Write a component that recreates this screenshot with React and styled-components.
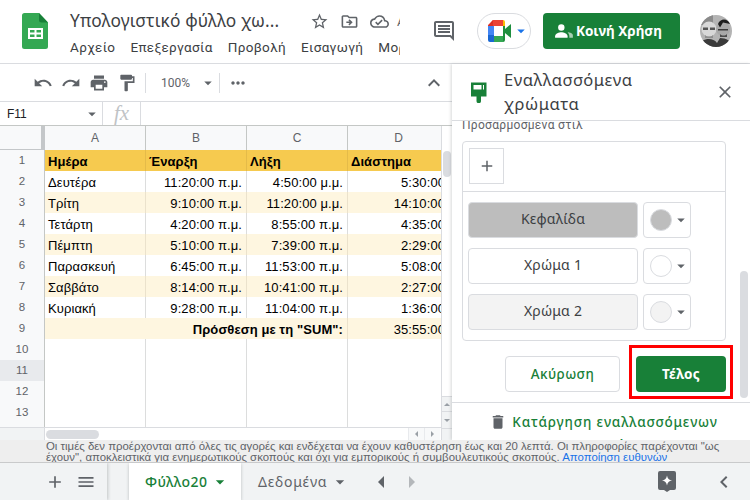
import React from "react";
import styled, { createGlobalStyle } from "styled-components";
import {
  MdUndo,
  MdRedo,
  MdPrint,
  MdFormatPaint,
  MdStarBorder,
  MdOutlineDriveFileMove,
  MdOutlineCloudDone,
  MdOutlineComment,
  MdKeyboardArrowUp,
  MdClose,
  MdAdd,
  MdDelete,
  MdArrowDropDown,
  MdChevronLeft,
  MdMoreHoriz,
  MdMenu,
} from "react-icons/md";

const Global = createGlobalStyle`
  html, body { margin: 0; padding: 0; background: #fff; }
  body { width: 750px; height: 500px; overflow: hidden; font-family: "Liberation Sans", Arial, sans-serif; }
  * { box-sizing: border-box; }
`;

const Page = styled.div`
  width: 750px;
  height: 500px;
  display: flex;
  flex-direction: column;
  overflow: hidden;
`;

/* top bar */
const TopBar = styled.header`
  height: 64px;
  flex-shrink: 0;
  display: flex;
  border-bottom: 1px solid #dadce0;
`;
const DocSide = styled.div`
  width: 400px;
  display: flex;
  padding: 13px 0 0 22px;
  overflow: hidden;
  white-space: nowrap;
  svg { flex-shrink: 0; }
`;
const DocText = styled.div`
  margin-left: 21px;
  margin-top: -2px;
  display: flex;
  flex-direction: column;
`;
const TitleRow = styled.div`
  display: flex;
  align-items: center;
  height: 20px;
`;
const Title = styled.div`
  width: 240px;
  font: 17.3px/20px "Noto Sans", sans-serif;
  color: #3c4043;
  letter-spacing: 0.15px;
`;
const TitleIcons = styled.div`
  display: flex;
  align-items: center;
  gap: 11px;
  color: #5f6368;
  font-size: 19px;
  svg { flex-shrink: 0; }
`;
const Saved = styled.span`
  margin-left: -3px;
  font: 13px Roboto, sans-serif;
  color: #5f6368;
`;
const Menu = styled.nav`
  display: flex;
  gap: 15px;
  margin-top: 6px;
  font: 13.5px/20px Roboto, sans-serif;
  letter-spacing: 0.35px;
  color: #3c4043;
`;
const ActionSide = styled.div`
  flex: 1;
  display: flex;
  align-items: center;
  padding: 0 18px 2px 32px;
  color: #5f6368;
`;
const MeetButton = styled.div`
  width: 54px;
  height: 36px;
  margin-left: 21px;
  border: 1px solid #dadce0;
  border-radius: 18px;
  display: flex;
  align-items: center;
  padding-left: 10px;
  svg { flex-shrink: 0; }
`;
const ShareButton = styled.button`
  width: 137px;
  height: 36px;
  margin-left: 12px;
  border: 0;
  border-radius: 4px;
  background: #188038;
  color: #fff;
  display: flex;
  align-items: center;
  gap: 2px;
  padding: 0 0 0 11px;
  font: 700 13.5px "Noto Sans", sans-serif;
  white-space: nowrap;
`;
const Avatar = styled.svg`
  margin-left: 20px;
  flex-shrink: 0;
`;

/* main area */
const Body = styled.div`
  height: 376px;
  flex-shrink: 0;
  display: flex;
`;
const SheetSide = styled.div`
  width: 452px;
  flex-shrink: 0;
  display: flex;
  flex-direction: column;
  background: #fff;
`;
const Toolbar = styled.div`
  height: 38px;
  flex-shrink: 0;
  display: flex;
  align-items: center;
  padding-left: 33px;
  border-bottom: 1px solid #dadce0;
  color: #5f6368;
  font-size: 20px;
  svg { flex-shrink: 0; }
`;
const ToolIcons = styled.div`
  display: flex;
  align-items: center;
  gap: 8px;
`;
const ToolDivider = styled.div`
  width: 1px;
  height: 20px;
  background: #dadce0;
  margin: ${(p) => p.$margin};
`;
const Zoom = styled.span`
  font: 12px Roboto, sans-serif;
  color: #5f6368;
  width: 38px;
`;
const CollapseIcon = styled.div`
  margin-left: auto;
  margin-right: 6px;
  display: flex;
  font-size: 24px;
`;
const FormulaBar = styled.div`
  height: 24px;
  flex-shrink: 0;
  display: flex;
  align-items: center;
  border-bottom: 1px solid #c4c7c5;
`;
const CellName = styled.div`
  width: 103px;
  height: 100%;
  padding-left: 7px;
  display: flex;
  align-items: center;
  justify-content: space-between;
  font: 12px "Liberation Sans", sans-serif;
  color: #202124;
  border-right: 1px solid #dadce0;
  svg { margin-right: 1px; color: #5f6368; }
`;
const Fx = styled.div`
  width: 38px;
  height: 100%;
  font: italic 21px/22px "Liberation Serif", serif;
  color: #c0c3c6;
  text-align: center;
  border-right: 1px solid #dadce0;
`;
const GridArea = styled.div`
  flex: 1;
  min-height: 0;
  display: flex;
`;
const GridColumn = styled.div`
  width: 441px;
  flex-shrink: 0;
  display: flex;
  flex-direction: column;
  overflow: hidden;
`;
const Grid = styled.div`
  width: 450px;
  flex: 1;
  min-height: 0;
  overflow: hidden;
`;
const Row = styled.div`
  display: grid;
  grid-template-columns: 45px 101px 101px 101px 102px;
  height: ${(p) => (p.$head ? 24 : 21)}px;
`;
const Corner = styled.div`
  background: #f8f9fa;
  border-right: 4px solid #c4c7c9;
  border-bottom: 3px solid #c4c7c9;
`;
const ColHead = styled.div`
  background: #f8f9fa;
  border-right: 1px solid #c4c7c5;
  border-bottom: 1px solid #c4c7c5;
  font: 12px/25px "Liberation Sans", sans-serif;
  color: #5f6368;
  text-align: center;
`;
const RowHead = styled.div`
  background: ${(p) => (p.$active ? "#e8eaed" : "#f8f9fa")};
  border-right: 1px solid #c4c7c5;
  border-bottom: 1px solid #c4c7c5;
  font: 11.5px/21px "Liberation Sans", sans-serif;
  color: #5f6368;
  text-align: center;
`;
const rowColors = { head: "#f6ca4f", band: "#fef6e0", plain: "#fff" };
const lineColors = { head: "#e5bb49", band: "#ebe2cc", plain: "#dcdddd" };
const Cell = styled.div`
  grid-column: span ${(p) => p.$span || 1};
  background: ${(p) => rowColors[p.$tone]};
  border-right: 1px solid ${(p) => lineColors[p.$tone]};
  border-bottom: 1px solid ${(p) => lineColors[p.$tone]};
  padding: 1px 4px 0 3px;
  font: ${(p) => (p.$bold ? 700 : 400)} 13px/21px "Liberation Sans", sans-serif;
  letter-spacing: 0.08px;
  color: #000;
  text-align: ${(p) => (p.$right ? "right" : "left")};
  white-space: nowrap;
  overflow: hidden;
`;
const HScrollBar = styled.div`
  height: 13px;
  flex-shrink: 0;
  display: flex;
  align-items: center;
  background: #fff;
  border-top: 1px solid #dadce0;
`;
const HScrollCorner = styled.div`
  width: 45px;
  height: 100%;
  background: #f1f3f4;
  border-right: 1px solid #dadce0;
`;
const HThumb = styled.div`
  width: 53px;
  height: 9px;
  margin-left: 1px;
  border-radius: 5px;
  background: #dadce0;
`;
const ArrowBox = styled.div`
  width: 16px;
  height: 100%;
  display: flex;
  align-items: center;
  justify-content: center;
  border-left: 1px solid #e8eaed;
  background: #f8f9fa;
  margin-left: ${(p) => p.$push || 0};
`;
const Tri = styled.span`
  width: 0;
  height: 0;
  border: 3.5px solid transparent;
  ${(p) => p.$dir === "left" && "border-right-color: #9aa0a6; border-left-width: 0;"}
  ${(p) => p.$dir === "right" && "border-left-color: #9aa0a6; border-right-width: 0;"}
  ${(p) => p.$dir === "up" && "border-bottom-color: #9aa0a6; border-top-width: 0;"}
  ${(p) => p.$dir === "down" && "border-top-color: #9aa0a6; border-bottom-width: 0;"}
`;
const VScroll = styled.div`
  width: 11px;
  flex-shrink: 0;
  display: flex;
  flex-direction: column;
  align-items: center;
  padding-top: 25px;
  background: #fff;
  border-left: 1px solid #dadce0;
`;
const VThumb = styled.div`
  width: 8px;
  height: 26px;
  border-radius: 4px;
  background: #dadce0;
`;
const VArrows = styled.div`
  margin-top: auto;
  width: 100%;
  display: flex;
  flex-direction: column;
  background: #f1f3f4;
`;
const VArrow = styled.div`
  height: ${(p) => p.$height}px;
  display: flex;
  align-items: center;
  justify-content: center;
  border-top: 1px solid #dadce0;
`;

/* side panel */
const Panel = styled.aside`
  flex: 1;
  display: flex;
  flex-direction: column;
  background: #fff;
  box-shadow: -1px 0 3px rgba(60, 64, 67, 0.2);
  z-index: 1;
  min-height: 0;
  overflow: hidden;
`;
const PanelHead = styled.div`
  height: 57px;
  flex-shrink: 0;
  display: flex;
  align-items: center;
  padding-left: 16px;
  border-bottom: 1px solid #dadce0;
  color: #5f6368;
`;
const PanelTitle = styled.div`
  width: 196px;
  margin-left: 14px;
  font: 16.5px/24px "Noto Sans", sans-serif;
  letter-spacing: 0.6px;
  color: #3c4043;
`;
const CloseIcon = styled.div`
  margin-left: 15px;
  display: flex;
  font-size: 20px;
`;
const PanelScroll = styled.div`
  flex: 1;
  min-height: 0;
  position: relative;
  padding: 0 24px 0 10px;
  overflow: hidden;
`;
const Clipped = styled.div`
  height: 20px;
  font: 12px/9px Roboto, sans-serif;
  letter-spacing: 0.3px;
  color: #5f6368;
`;
const StyleCard = styled.div`
  width: 264px;
  height: 200px;
  border: 1px solid #dadce0;
  border-radius: 4px;
`;
const AddRow = styled.div`
  height: 50px;
  padding: 6px 0 0 6px;
  border-bottom: 1px solid #dadce0;
`;
const AddBox = styled.div`
  width: 35px;
  height: 36px;
  border: 1px solid #dadce0;
  display: flex;
  align-items: center;
  justify-content: center;
  color: #5f6368;
  font-size: 18px;
`;
const ColorRows = styled.div`
  display: flex;
  flex-direction: column;
  gap: 10px;
  padding: 10px 0 0 5px;
`;
const ColorRow = styled.div`
  display: flex;
  gap: 5px;
`;
const ColorLabel = styled.div`
  width: 170px;
  height: 36px;
  border: 1px solid #dadce0;
  border-radius: 4px;
  background: ${(p) => p.$bg};
  font: 14px/32px "Noto Sans", sans-serif;
  letter-spacing: 0.2px;
  color: #3c4043;
  text-align: center;
`;
const ColorPick = styled.div`
  width: 48px;
  height: 36px;
  border: 1px solid #dadce0;
  border-radius: 4px;
  display: flex;
  align-items: center;
  padding-left: 6px;
  color: #5f6368;
  font-size: 18px;
`;
const Swatch = styled.span`
  width: 22px;
  height: 22px;
  flex-shrink: 0;
  border-radius: 50%;
  border: 1px solid #dadce0;
  background: ${(p) => p.$bg};
`;
const Actions = styled.div`
  display: flex;
  gap: 16px;
  justify-content: flex-end;
  width: 264px;
  margin-top: 15px;
`;
const CancelButton = styled.button`
  width: 115px;
  height: 36px;
  background: #fff;
  border: 1px solid #dadce0;
  border-radius: 4px;
  font: 500 13.5px "Noto Sans", sans-serif;
  letter-spacing: 0.4px;
  color: #188038;
`;
const DoneButton = styled.button`
  position: relative;
  width: 90px;
  height: 36px;
  background: #188038;
  border: 0;
  border-radius: 4px;
  font: 700 13.5px "Noto Sans", sans-serif;
  letter-spacing: 0.3px;
  color: #fff;
  &::after {
    content: "";
    position: absolute;
    inset: -11px -7px -7px -7px;
    border: 3px solid #f00;
  }
`;
const PanelThumb = styled.div`
  position: absolute;
  right: 2px;
  top: 150px;
  width: 8px;
  height: 127px;
  border-radius: 4px;
  background: #dadce0;
`;
const PanelFoot = styled.div`
  height: 38px;
  flex-shrink: 0;
  border-top: 1px solid #dadce0;
  display: flex;
  align-items: flex-start;
  padding: 8px 0 0 37px;
  gap: 4px;
  overflow: hidden;
  svg { color: #5f6368; flex-shrink: 0; margin-top: 2px; }
`;
const FootLabel = styled.div`
  width: 208px;
  text-align: center;
  font: 500 13.5px/23px "Noto Sans", sans-serif;
  letter-spacing: 0.85px;
  color: #188038;
`;

/* bottom */
const Notice = styled.div`
  height: 23px;
  flex-shrink: 0;
  background: #eeeeee;
  border-bottom: 1px solid #c9cacb;
  padding: 1px 0 0 46px;
  font: 11.4px/11px "Liberation Sans", sans-serif;
  color: #5f6368;
  white-space: nowrap;
  overflow: hidden;
  position: relative;
  z-index: 2;
`;
const Disclaimer = styled.span`
  color: #1a73e8;
`;
const TabBar = styled.div`
  height: 37px;
  flex-shrink: 0;
  display: flex;
  align-items: stretch;
  background: #f1f3f4;
  color: #5f6368;
`;
const AddSheets = styled.div`
  width: 107px;
  display: flex;
  align-items: center;
  gap: 11px;
  padding-left: 45px;
  font-size: 20px;
  box-shadow: 1px 0 3px rgba(60, 64, 67, 0.25);
`;
const Tab = styled.div`
  display: flex;
  align-items: center;
  width: ${(p) => p.$width}px;
  margin-left: ${(p) => p.$left || 0}px;
  padding-left: ${(p) => p.$pad}px;
  background: ${(p) => (p.$active ? "#fff" : "transparent")};
  color: ${(p) => (p.$active ? "#188038" : "#5f6368")};
  font: ${(p) => (p.$active ? 500 : 400)} 14px "Noto Sans", sans-serif;
  letter-spacing: ${(p) => (p.$active ? 0.4 : 0.8)}px;
  box-shadow: ${(p) => (p.$active ? "0 1px 3px rgba(60,64,67,.3)" : "none")};
  white-space: nowrap;
  svg { margin-left: 3px; flex-shrink: 0; }
`;
const TabNav = styled.div`
  display: flex;
  align-items: center;
  gap: 25px;
  margin-left: 32px;
`;
const NavTri = styled.span`
  width: 0;
  height: 0;
  border: 6px solid transparent;
  ${(p) => (p.$dir === "left" ? `border-right-color: #5f6368; border-left-width: 0;` : `border-left-color: #b4b7ba; border-right-width: 0;`)}
`;
const TabEnd = styled.div`
  margin-left: auto;
  display: flex;
  align-items: center;
  gap: 36px;
  padding-right: 14px;
`;

const SheetsLogo = () => (
  <svg width="27" height="36" viewBox="0 0 27 36">
    <path d="M2.5 0H17l9 9.5V33.5a2.5 2.5 0 0 1-2.5 2.5h-21A2.500 2.500 0 0 1 0 33.500V2.500A2.500 2.500 0 0 1 2.500 0z" fill="#34a853" />
    <path d="M17 0l9 9.500h-6.500A2.500 2.500 0 0 1 17 7z" fill="#188038" />
    <path d="M6 15h15v11H6zm2 2v2.500h4.500V17zm6.500 0v2.500H19V17zM8 21.500V24h4.500v-2.500zm6.500 0V24H19v-2.500z" fill="#fff" fillRule="evenodd" />
  </svg>
);

const MeetLogo = () => (
  <svg width="24" height="22" viewBox="0 0 24 22">
    <path d="M5 0h10v6H6v5H0V5z" fill="#ea4335" />
    <path d="M5 0v6H0z" fill="#d93025" />
    <path d="M0 6h6v9H0z" fill="#4285f4" />
    <path d="M0 15h6v7H2a2 2 0 0 1-2-2z" fill="#1967d2" />
    <path d="M6 16h9v6H6z" fill="#34a853" />
    <path d="M15 0a2 2 0 0 1 2 2v5h-2z" fill="#fbbc04" />
    <path d="M15 6h2v3l6-5v14l-6-5v7a2 2 0 0 1-2 2z" fill="#1e8e3e" />
  </svg>
);

const AvatarImage = () => (
  <Avatar width="32" height="32" viewBox="0 0 32 32">
    <clipPath id="av"><circle cx="16" cy="16" r="16" /></clipPath>
    <g clipPath="url(#av)">
      <rect width="32" height="32" fill="#b4b4b4" />
      <rect x="0" y="0" width="13" height="10" fill="#8a8a8a" />
      <circle cx="9" cy="14" r="7.500" fill="#d8d8d8" />
      <path d="M3 12.500h5v2.500H3zM10 12.500h5v2.500h-5z" fill="#555" />
      <path d="M5 20c2 2 6 2 8 0v3H5z" fill="#8f8f8f" />
      <circle cx="23" cy="14" r="7" fill="#a8a8a8" />
      <path d="M18 9c2-6 10-6 12 0l-7-1.500-3 5z" fill="#1e1e1e" />
      <path d="M18 14h10v1.500H18z" fill="#3a3a3a" />
      <path d="M20 19c2 2 5 2 7 0v3h-7z" fill="#4a4a4a" />
      <path d="M0 32c0-6 4-8 9-8 3 0 6 1 8 4l3-5c6 0 12 3 12 9z" fill="#3a3a3a" />
    </g>
  </Avatar>
);

const PanelPaint = () => (
  <svg width="22" height="22" viewBox="0 0 22 22" style={{ flexShrink: 0 }}>
    <path d="M3 1.500h15.500v14H3zM5.500 4v4.500h8V4zM15 4v4.500h1V4z" fill="#188038" fillRule="evenodd" />
    <path d="M8.500 15h4.500v5a2.250 2.250 0 0 1-4.500 0z" fill="#188038" />
  </svg>
);

const ShareIcon = () => (
  <svg width="20" height="16" viewBox="0 0 22 18">
    <circle cx="8" cy="5" r="3.600" fill="#fff" />
    <path d="M1 15c0-3 4.500-4.500 7-4.500S15 12 15 15v1.500H1z" fill="#fff" />
    <path d="M15 10.500c2.500 0 6 1 6 3.500v2.500h-4V15c0-2-1-3.500-2-4.500z" fill="#a5d0b2" />
  </svg>
);

const ExploreIcon = () => (
  <svg width="18" height="21" viewBox="0 0 18 21">
    <path d="M2 0h14a2 2 0 0 1 2 2v15a2 2 0 0 1-2 2h-4l-3 2-3-2H2a2 2 0 0 1-2-2V2a2 2 0 0 1 2-2z" fill="#5f6368" />
    <path d="M9 4.500c.5 3 2 4.500 5 5-3 .5-4.500 2-5 5-.5-3-2-4.500-5-5 3-.5 4.500-2 5-5z" fill="#fff" />
  </svg>
);

const ROWS = [
  ["Δευτέρα", "11:20:00 π.μ.", "4:50:00 μ.μ.", "5:30:00"],
  ["Τρίτη", "9:10:00 π.μ.", "11:20:00 μ.μ.", "14:10:00"],
  ["Τετάρτη", "4:20:00 π.μ.", "8:55:00 π.μ.", "4:35:00"],
  ["Πέμπτη", "5:10:00 π.μ.", "7:39:00 π.μ.", "2:29:00"],
  ["Παρασκευή", "6:45:00 π.μ.", "11:53:00 π.μ.", "5:08:00"],
  ["Σαββάτο", "8:14:00 π.μ.", "10:41:00 π.μ.", "2:27:00"],
  ["Κυριακή", "9:28:00 π.μ.", "11:04:00 π.μ.", "1:36:00"],
];

const COLORS = [
  { label: "Κεφαλίδα", bg: "#bdbdbd", swatch: "#bdbdbd" },
  { label: "Χρώμα 1", bg: "#fff", swatch: "#fff" },
  { label: "Χρώμα 2", bg: "#f3f3f3", swatch: "#f3f3f3" },
];

export default function App() {
  return (
    <Page>
      <Global />
      <TopBar>
        <DocSide>
          <SheetsLogo />
          <DocText>
            <TitleRow>
              <Title>Υπολογιστικό φύλλο χω...</Title>
              <TitleIcons>
                <MdStarBorder />
                <MdOutlineDriveFileMove />
                <MdOutlineCloudDone />
                <Saved>Αποθηκεύτηκε</Saved>
              </TitleIcons>
            </TitleRow>
            <Menu>
              <span>Αρχείο</span>
              <span>Επεξεργασία</span>
              <span>Προβολή</span>
              <span>Εισαγωγή</span>
              <span>Μορφή</span>
            </Menu>
          </DocText>
        </DocSide>
        <ActionSide>
          <MdOutlineComment size={24} />
          <MeetButton>
            <MeetLogo />
            <MdArrowDropDown size={18} color="#1a73e8" />
          </MeetButton>
          <ShareButton>
            <ShareIcon />
            Κοινή Χρήση
          </ShareButton>
          <AvatarImage />
        </ActionSide>
      </TopBar>
      <Body>
        <SheetSide>
          <Toolbar>
            <ToolIcons>
              <MdUndo />
              <MdRedo />
              <MdPrint />
              <MdFormatPaint />
            </ToolIcons>
            <ToolDivider $margin="0 15px 0 8px" />
            <Zoom>100%</Zoom>
            <MdArrowDropDown size={18} />
            <ToolDivider $margin="0 8px 0 2px" />
            <MdMoreHoriz />
            <CollapseIcon><MdKeyboardArrowUp /></CollapseIcon>
          </Toolbar>
          <FormulaBar>
            <CellName>
              F11
              <MdArrowDropDown size={18} />
            </CellName>
            <Fx>fx</Fx>
          </FormulaBar>
          <GridArea>
            <GridColumn>
              <Grid>
                <Row $head>
                  <Corner />
                  {["A", "B", "C", "D"].map((c) => (
                    <ColHead key={c}>{c}</ColHead>
                  ))}
                </Row>
                <Row>
                  <RowHead>1</RowHead>
                  {["Ημέρα", "Έναρξη", "Λήξη", "Διάστημα"].map((c) => (
                    <Cell key={c} $tone="head" $bold>{c}</Cell>
                  ))}
                </Row>
                {ROWS.map((r, i) => {
                  const tone = i % 2 ? "band" : "plain";
                  return (
                    <Row key={r[0]}>
                      <RowHead>{i + 2}</RowHead>
                      <Cell $tone={tone}>{r[0]}</Cell>
                      <Cell $tone={tone} $right>{r[1]}</Cell>
                      <Cell $tone={tone} $right>{r[2]}</Cell>
                      <Cell $tone={tone} $right>{r[3]}</Cell>
                    </Row>
                  );
                })}
                <Row>
                  <RowHead>9</RowHead>
                  <Cell $tone="band" $span={3} $right $bold>Πρόσθεση με τη "SUM":</Cell>
                  <Cell $tone="band" $right>35:55:00</Cell>
                </Row>
                {[10, 11, 12, 13].map((n) => (
                  <Row key={n}>
                    <RowHead $active={n === 11}>{n}</RowHead>
                    <Cell $tone="plain" />
                    <Cell $tone="plain" />
                    <Cell $tone="plain" />
                    <Cell $tone="plain" />
                  </Row>
                ))}
                <Row>
                  <RowHead />
                  <Cell $tone="plain" />
                  <Cell $tone="plain" />
                  <Cell $tone="plain" />
                  <Cell $tone="plain" />
                </Row>
              </Grid>
              <HScrollBar>
                <HScrollCorner />
                <HThumb />
                <ArrowBox $push="309px"><Tri $dir="left" /></ArrowBox>
                <ArrowBox><Tri $dir="right" /></ArrowBox>
              </HScrollBar>
            </GridColumn>
            <VScroll>
              <VThumb />
              <VArrows>
                <VArrow $height={15}><Tri $dir="up" /></VArrow>
                <VArrow $height={17}><Tri $dir="down" /></VArrow>
                <VArrow $height={12} />
              </VArrows>
            </VScroll>
          </GridArea>
        </SheetSide>
        <Panel>
          <PanelHead>
            <PanelPaint />
            <PanelTitle>Εναλλασσόμενα χρώματα</PanelTitle>
            <CloseIcon><MdClose /></CloseIcon>
          </PanelHead>
          <PanelScroll>
            <Clipped>Προσαρμοσμένα στιλ</Clipped>
            <StyleCard>
              <AddRow>
                <AddBox><MdAdd /></AddBox>
              </AddRow>
              <ColorRows>
                {COLORS.map((c) => (
                  <ColorRow key={c.label}>
                    <ColorLabel $bg={c.bg}>{c.label}</ColorLabel>
                    <ColorPick>
                      <Swatch $bg={c.swatch} />
                      <MdArrowDropDown />
                    </ColorPick>
                  </ColorRow>
                ))}
              </ColorRows>
            </StyleCard>
            <Actions>
              <CancelButton>Ακύρωση</CancelButton>
              <DoneButton>Τέλος</DoneButton>
            </Actions>
            <PanelThumb />
          </PanelScroll>
          <PanelFoot>
            <MdDelete size={18} />
            <FootLabel>Κατάργηση εναλλασσόμενων χρωμάτων</FootLabel>
          </PanelFoot>
        </Panel>
      </Body>
      <Notice>
        Οι τιμές δεν προέρχονται από όλες τις αγορές και ενδέχεται να έχουν καθυστέρηση έως και 20 λεπτά. Οι πληροφορίες παρέχονται "ως
        <br />
        έχουν", αποκλειστικά για ενημερωτικούς σκοπούς και όχι για εμπορικούς ή συμβουλευτικούς σκοπούς. <Disclaimer>Αποποίηση ευθυνών</Disclaimer>
      </Notice>
      <TabBar>
        <AddSheets>
          <MdAdd />
          <MdMenu />
        </AddSheets>
        <Tab $active $width={112} $left={22} $pad={16}>
          Φύλλο20
          <MdArrowDropDown size={20} />
        </Tab>
        <Tab $width={105} $pad={17}>
          Δεδομένα
          <MdArrowDropDown size={20} />
        </Tab>
        <TabNav>
          <NavTri $dir="left" />
          <NavTri $dir="right" />
        </TabNav>
        <TabEnd>
          <ExploreIcon />
          <MdChevronLeft size={24} />
        </TabEnd>
      </TabBar>
    </Page>
  );
}
